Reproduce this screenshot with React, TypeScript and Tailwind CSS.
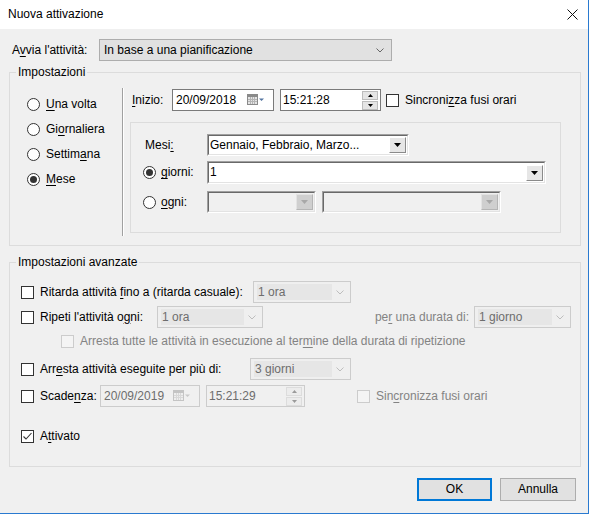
import React from "react";

const U = ({ children }: { children: React.ReactNode }) => (
  <span className="underline decoration-1 underline-offset-[2px]">{children}</span>
);

function Radio({ checked }: { checked?: boolean }) {
  return (
    <span className="w-[13px] h-[13px] rounded-full border border-[#333] bg-white flex items-center justify-center shrink-0">
      {checked && <span className="w-[7px] h-[7px] rounded-full bg-[#333]" />}
    </span>
  );
}

function Check({ checked, disabled }: { checked?: boolean; disabled?: boolean }) {
  return (
    <span
      className={`w-[13px] h-[13px] border shrink-0 flex items-center justify-center ${
        disabled ? "border-[#cccccc] bg-[#f4f4f4]" : "border-[#333] bg-white"
      }`}
    >
      {checked && (
        <svg width="11" height="11" viewBox="0 0 11 11">
          <polyline points="1.5,5.5 4,8 9.5,2" fill="none" stroke="#333" strokeWidth="1.1" />
        </svg>
      )}
    </span>
  );
}

function Chevron({ color = "#555" }: { color?: string }) {
  return (
    <svg width="8" height="5" viewBox="0 0 8 5" className="shrink-0">
      <polyline points="0.5,0.5 4,4 7.5,0.5" fill="none" stroke={color} strokeWidth="1" />
    </svg>
  );
}

// win10 style combo, disabled look
function FlatCombo({ w, text }: { w: string; text: string }) {
  return (
    <div className={`${w} h-[22px] border border-[#cccccc] bg-[#efefef] flex items-center pl-[3px] pr-[6px] gap-[4px]`}>
      <span className="flex-1 h-[16px] bg-[#e6e6e6] text-[#6d6d6d] leading-[16px] pl-[1px]">{text}</span>
      <Chevron color="#bdbdbd" />
    </div>
  );
}

function Tri({ color }: { color: string }) {
  return (
    <svg width="7" height="4" viewBox="0 0 7 4">
      <path d="M0 0 L7 0 L3.5 4 Z" fill={color} />
    </svg>
  );
}

// old 3D sunken combo
function Combo3D({ w, text, disabled }: { w: string; text?: string; disabled?: boolean }) {
  return (
    <div className={`${w} h-full border border-t-[#a0a0a0] border-l-[#a0a0a0] border-b-white border-r-white`}>
      <div
        className={`h-full border border-t-[#696969] border-l-[#696969] border-b-[#e3e3e3] border-r-[#e3e3e3] flex items-center justify-between pl-[1px] pr-[1px] ${
          disabled ? "bg-[#f0f0f0]" : "bg-white"
        }`}
      >
        <span className="text-black">{text}</span>
        <span
          className={`w-[17px] h-[16px] border flex items-center justify-center ${
            disabled
              ? "bg-[#cfcfcf] border-t-[#e3e3e3] border-l-[#e3e3e3] border-b-[#b5b5b5] border-r-[#b5b5b5]"
              : "bg-[#e6e6e6] border-t-white border-l-white border-b-[#8a8a8a] border-r-[#8a8a8a]"
          }`}
        >
          <Tri color={disabled ? "#a8a8a8" : "#000"} />
        </span>
      </div>
    </div>
  );
}

function CalIcon({ disabled }: { disabled?: boolean }) {
  const c = disabled ? "#c4c4c4" : "#8a8a8a";
  return (
    <svg width="17" height="12" viewBox="0 0 17 12" className="shrink-0">
      <rect x="0.5" y="0.5" width="10" height="10" fill={disabled ? "#eeeeee" : "#e4e4e4"} stroke={c} />
      <rect x="1" y="1" width="9" height="2" fill={c} />
      <path d="M3.5 3 V10 M5.5 3 V10 M7.5 3 V10 M1 5.5 H10 M1 7.5 H10" stroke={disabled ? "#d8d8d8" : "#b4b4b4"} strokeWidth="1" />
      <path d="M12 4.5 H17 L14.5 7 Z" fill={disabled ? "#c8c8c8" : "#51729f"} />
    </svg>
  );
}

function Spin({ disabled }: { disabled?: boolean }) {
  const c = disabled ? "#9a9a9a" : "#000";
  const b = disabled ? "border-[#dcdcdc] bg-[#ececec]" : "border-[#bdbdbd] bg-[#e5e5e5]";
  return (
    <div className="flex flex-col gap-[1px] w-[16px] shrink-0">
      <span className={`h-[9px] border ${b} flex items-center justify-center`}>
        <svg width="5" height="3" viewBox="0 0 5 3"><path d="M0 3 L5 3 L2.5 0 Z" fill={c} /></svg>
      </span>
      <span className={`h-[9px] border ${b} flex items-center justify-center`}>
        <svg width="5" height="3" viewBox="0 0 5 3"><path d="M0 0 L5 0 L2.5 3 Z" fill={c} /></svg>
      </span>
    </div>
  );
}

function DateBox({ w, text, disabled }: { w: string; text: string; disabled?: boolean }) {
  return (
    <div
      className={`${w} h-[22px] border flex items-center pl-[3px] pr-[9px] justify-between ${
        disabled ? "border-[#cccccc] bg-[#f0f0f0] text-[#6d6d6d]" : "border-[#7a7a7a] bg-white"
      }`}
    >
      <span>{text}</span>
      <CalIcon disabled={disabled} />
    </div>
  );
}

function TimeBox({ w, text, disabled }: { w: string; text: string; disabled?: boolean }) {
  return (
    <div
      className={`${w} h-[22px] border flex items-center pl-[2px] pr-[2px] justify-between ${
        disabled ? "border-[#cccccc] bg-[#f0f0f0] text-[#6d6d6d]" : "border-[#7a7a7a] bg-white"
      }`}
    >
      <span>{text}</span>
      <Spin disabled={disabled} />
    </div>
  );
}

export default function App() {
  return (
    <div className="w-[590px] h-[515px] bg-white font-['Liberation_Sans',Arial,sans-serif] text-[12px] leading-[15px] text-black">
      <div className="w-[589px] h-[514px] border-r border-b border-[#2a7ad0] flex flex-col">
        {/* title bar */}
        <div className="h-[29px] shrink-0 bg-white flex items-center justify-between pl-[8px] pr-[10px]">
          <span>Nuova attivazione</span>
          <svg width="11" height="11" viewBox="0 0 11 11">
            <path d="M0.5 0.5 L10.5 10.5 M10.5 0.5 L0.5 10.5" stroke="#111" strokeWidth="1" />
          </svg>
        </div>

        <div className="flex-1 bg-[#f0f0f0] flex flex-col">
          {/* Avvia */}
          <div className="mt-[10px] h-[22px] flex items-center">
            <span className="w-[99px] pl-[12px]">
              A<U>v</U>via l'attività:
            </span>
            <div className="w-[293px] h-[22px] border border-[#adadad] bg-[#e1e1e1] flex items-center justify-between pl-[4px] pr-[7px]">
              <span>In base a una pianificazione</span>
              <Chevron color="#666" />
            </div>
          </div>

          {/* Impostazioni */}
          <fieldset className="mt-[4px] ml-[9px] w-[572px] h-[181px] border border-[#dcdcdc] p-0 m-0">
            <legend className="ml-[6px] px-[2px]">Impostazioni</legend>
            <div className="flex items-start">
              <div className="w-[112px] pt-[12px] pl-[17px] flex flex-col">
                {[
                  [<><U>U</U>na volta</>, false],
                  [<>Gi<U>o</U>rnaliera</>, false],
                  [<>Settim<U>a</U>na</>, false],
                  [<><U>M</U>ese</>, true],
                ].map(([label, on], i) => (
                  <div key={i} className="h-[25px] flex items-center gap-[6px]">
                    <Radio checked={on as boolean} />
                    <span>{label as React.ReactNode}</span>
                  </div>
                ))}
              </div>
              <div className="mt-[8px] h-[148px] w-[2px] border-l border-r border-l-[#a0a0a0] border-r-white" />
              <div className="pt-[9px] flex flex-col">
                <div className="h-[22px] flex items-center">
                  <span className="w-[48px] pl-[8px]">
                    <U>I</U>nizio:
                  </span>
                  <DateBox w="w-[102px]" text="20/09/2018" />
                  <div className="ml-[6px]">
                    <TimeBox w="w-[101px]" text="15:21:28" />
                  </div>
                  <div className="ml-[5px] flex items-center gap-[6px]">
                    <Check />
                    <span>
                      Sincroni<U>z</U>za fusi orari
                    </span>
                  </div>
                </div>

                <div className="mt-[11px] ml-[6px] w-[431px] h-[111px] border border-[#dcdcdc] pt-[11px] pl-[12px] flex flex-col">
                  <div className="h-[22px] flex items-center">
                    <span className="w-[64px] pl-[2px]">
                      Mesi<U>:</U>
                    </span>
                    <Combo3D w="w-[202px]" text="Gennaio, Febbraio, Marzo..." />
                  </div>
                  <div className="mt-[5px] h-[23px] flex items-center">
                    <span className="w-[64px] flex items-center gap-[5px]">
                      <Radio checked />
                      <span>
                        <U>g</U>iorni:
                      </span>
                    </span>
                    <Combo3D w="w-[339px]" text="1" />
                  </div>
                  <div className="mt-[7px] h-[22px] flex items-center">
                    <span className="w-[64px] flex items-center gap-[5px]">
                      <Radio />
                      <span>
                        <U>o</U>gni:
                      </span>
                    </span>
                    <Combo3D w="w-[109px]" disabled />
                    <div className="ml-[6px] h-full">
                      <Combo3D w="w-[179px]" disabled />
                    </div>
                  </div>
                </div>
              </div>
            </div>
          </fieldset>

          {/* Impostazioni avanzate */}
          <fieldset className="mt-[9px] ml-[9px] w-[572px] h-[212px] border border-[#dcdcdc] p-0 m-0">
            <legend className="ml-[6px] px-[2px]">Impostazioni avanzate</legend>
            <div className="pl-[11px] flex flex-col">
              <div className="mt-[11px] h-[22px] flex items-center">
                <Check />
                <span className="ml-[6px] w-[213px]">
                  Ritarda attività <U>f</U>ino a (ritarda casuale):
                </span>
                <FlatCombo w="w-[98px]" text="1 ora" />
              </div>
              <div className="mt-[3px] h-[22px] flex items-center">
                <Check />
                <span className="ml-[6px] w-[117px]">
                  Ripeti l'attività o<U>g</U>ni:
                </span>
                <FlatCombo w="w-[106px]" text="1 ora" />
                <span className="w-[211px] text-right pr-[5px] text-[#838383]">
                  pe<U>r</U> una durata di:
                </span>
                <FlatCombo w="w-[97px]" text="1 giorno" />
              </div>
              <div className="mt-[6px] h-[14px] pl-[40px] flex items-center gap-[6px]">
                <Check disabled />
                <span className="text-[#838383]">
                  Arresta tutte le attività in esecuzione al ter<U>m</U>ine della durata di ripetizione
                </span>
              </div>
              <div className="mt-[10px] h-[22px] flex items-center">
                <Check />
                <span className="ml-[6px] w-[210px]">
                  Arr<U>e</U>sta attività eseguite per più di:
                </span>
                <FlatCombo w="w-[101px]" text="3 giorni" />
              </div>
              <div className="mt-[5px] h-[22px] flex items-center">
                <Check />
                <span className="ml-[6px] w-[60px]">
                  Scade<U>n</U>za:
                </span>
                <DateBox w="w-[100px]" text="20/09/2019" disabled />
                <div className="ml-[6px]">
                  <TimeBox w="w-[99px]" text="15:21:29" disabled />
                </div>
                <div className="ml-[52px] flex items-center gap-[6px]">
                  <Check disabled />
                  <span className="text-[#838383]">
                    Sin<U>c</U>ronizza fusi orari
                  </span>
                </div>
              </div>
              <div className="mt-[22px] h-[14px] flex items-center">
                <Check checked />
                <span className="ml-[6px]">
                  A<U>t</U>tivato
                </span>
              </div>
            </div>
          </fieldset>

          {/* buttons */}
          <div className="mt-[11px] flex justify-end gap-[8px] pr-[12px]">
            <button className="w-[75px] h-[23px] border-2 border-[#0078d7] bg-[#e1e1e1] flex items-center justify-center">
              OK
            </button>
            <button className="w-[76px] h-[23px] border border-[#adadad] bg-[#e1e1e1] flex items-center justify-center">
              Annulla
            </button>
          </div>
        </div>
      </div>
    </div>
  );
}
